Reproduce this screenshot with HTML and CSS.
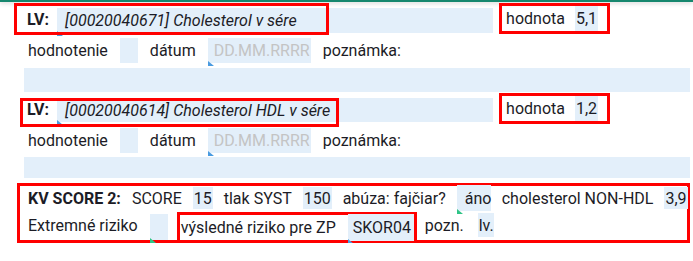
FILE: index.html
```html
<!DOCTYPE html>
<html>
<head>
	<title>KV SCORE 2</title>
	<meta charset="UTF-8">
	<meta name="viewport" content="width=device-width, initial-scale=1.0">
	<link rel="stylesheet" href="styles.css">
</head>
<body>
	<div class="topbar"></div>
	<div class="form">

		<div class="row row-lv">
			<span class="mark mark-lv"></span>
			<b class="lbl">LV:</b>
			<span class="fld fld-name tri-blue">[00020040671] Cholesterol v sére</span>
			<span class="box box-val">
				<span>hodnota</span>
				<span class="fld fld-val">5,1</span>
			</span>
		</div>
		<div class="row row-meta">
			<span>hodnotenie</span>
			<span class="fld fld-empty"></span>
			<span>dátum</span>
			<span class="fld fld-date tri-blue">DD.MM.RRRR</span>
			<span>poznámka:</span>
		</div>
		<div class="row row-note">
			<span class="fld fld-note"></span>
		</div>

		<div class="row row-lv row-lv2">
			<span class="mark mark-lv2"></span>
			<b class="lbl">LV:</b>
			<span class="fld fld-name tri-blue">[00020040614] Cholesterol HDL v sére</span>
			<span class="box box-val">
				<span>hodnota</span>
				<span class="fld fld-val">1,2</span>
			</span>
		</div>
		<div class="row row-meta">
			<span>hodnotenie</span>
			<span class="fld fld-empty"></span>
			<span>dátum</span>
			<span class="fld fld-date tri-blue">DD.MM.RRRR</span>
			<span>poznámka:</span>
		</div>
		<div class="row row-note row-note2">
			<span class="fld fld-note"></span>
		</div>

		<div class="box box-score">
			<div class="line">
				<b>KV SCORE 2:</b>
				<span>SCORE</span>
				<span class="fld fld-num">15</span>
				<span>tlak SYST</span>
				<span class="fld fld-num">150</span>
				<span>abúza: fajčiar?</span>
				<span class="fld fld-sel tri-green">áno</span>
				<span>cholesterol NON-HDL</span>
				<span class="fld fld-num">3,9</span>
			</div>
			<div class="line line2">
				<span>Extremné riziko</span>
				<span class="fld fld-empty2 tri-green"></span>
				<span class="box box-risk">
					<span>výsledné riziko pre ZP</span>
					<span class="fld fld-code tri-blue">SKOR04</span>
				</span>
				<span class="pozn">pozn.</span>
				<span class="fld fld-lv">lv.</span>
			</div>
		</div>

	</div>
</body>
</html>
```

FILE: styles.css
```css
body {
	margin: 0;
	padding: 0;
	background-color: #fff;
	color: #1c1c26;
	font-family: Roboto, "Noto Sans", sans-serif;
	font-size: 16px;
}

.topbar {
	height: 2px;
	background-color: #16876e;
	box-shadow: 0 1px 4px rgba(0, 0, 0, 0.25);
}

.row {
	display: flex;
	align-items: center;
	gap: 12px;
	position: relative;
	white-space: nowrap;
}

.fld {
	background-color: #e3effa;
	display: flex;
	align-items: center;
	position: relative;
	box-sizing: border-box;
}

.lbl {
	font-weight: 700;
}

.box {
	border: 3px solid #f00;
	box-sizing: border-box;
	display: flex;
	align-items: center;
}

/* red annotation frames lying over the fields */
.mark {
	position: absolute;
	border: 3px solid #f00;
	box-sizing: border-box;
	pointer-events: none;
	z-index: 2;
}

.mark-lv {
	left: 14px;
	top: 0;
	width: 315px;
	height: 32px;
}

.mark-lv2 {
	left: 20px;
	top: 5px;
	width: 319px;
	height: 29px;
}

/* small corner marks */
.tri-blue:after,
.tri-green:after {
	content: "";
	position: absolute;
	left: 0;
	bottom: -3px;
	width: 0;
	height: 0;
	border-bottom: 5px solid #4a9be0;
	border-right: 6px solid transparent;
}

.tri-green:after {
	border-bottom-color: #2fc486;
}

/* LV row */
.row-lv {
	margin-top: 1px;
	height: 32px;
	padding-left: 27px;
	gap: 0;
	align-items: flex-start;
}

.row-lv .lbl {
	margin-top: 7px;
	margin-right: 8px;
}

.fld-name {
	width: 436px;
	height: 25px;
	margin-top: 5px;
	padding-left: 8px;
	font-style: italic;
}

.box-val {
	margin-left: 6px;
	height: 31px;
	padding: 0 9px 0 4px;
	gap: 10px;
}

.fld-val {
	height: 25px;
	padding: 0 1px;
}

.row-lv2 {
	margin-top: 1px;
}

.row-lv2 .fld-name {
	height: 24px;
}

/* hodnotenie / dátum row */
.row-meta {
	margin-top: 3px;
	height: 25px;
	padding-left: 28px;
}

.row-meta .fld {
	height: 25px;
}

.fld-empty {
	width: 18px;
}

.fld-date {
	color: #c4c4c4;
	padding: 0 1px 0 6px;
}

/* note row */
.row-note {
	margin-top: 5px;
	padding-left: 24px;
}

.fld-note {
	width: 666px;
	height: 24px;
}

.row-note2 {
	margin-top: 4px;
}

.row-note2 .fld-note {
	height: 21px;
}

/* KV SCORE block */
.box-score {
	margin: 5px 0 0 17px;
	width: 673px;
	height: 60px;
	flex-direction: column;
	align-items: stretch;
	white-space: nowrap;
}

.line {
	display: flex;
	align-items: center;
	gap: 11px;
	height: 24px;
	padding-left: 8px;
}

.fld-num {
	height: 22px;
	padding: 0 1px;
}

.fld-sel {
	height: 26px;
	align-self: flex-start;
	margin-top: -1px;
	padding: 0 0 0 8px;
	width: 34px;
}

.line2 {
	height: 30px;
	gap: 12px;
	padding-left: 8px;
	align-items: flex-end;
}

.line2 > span {
	margin-bottom: 5px;
}

.fld-empty2 {
	width: 18px;
	height: 26px;
	margin-bottom: 0 !important;
}

.box-risk {
	height: 31px;
	margin-bottom: -3px !important;
	margin-left: -3px;
	margin-right: -4px;
	padding: 0 0 0 1px;
	gap: 12px;
}

.fld-code {
	height: 27px;
	padding: 0 0 0 5px;
	width: 66px;
}

.pozn {
	margin-right: 2px;
}

.fld-lv {
	height: 24px;
	width: 16px;
	padding-left: 1px;
	margin-bottom: 3px !important;
}
```
